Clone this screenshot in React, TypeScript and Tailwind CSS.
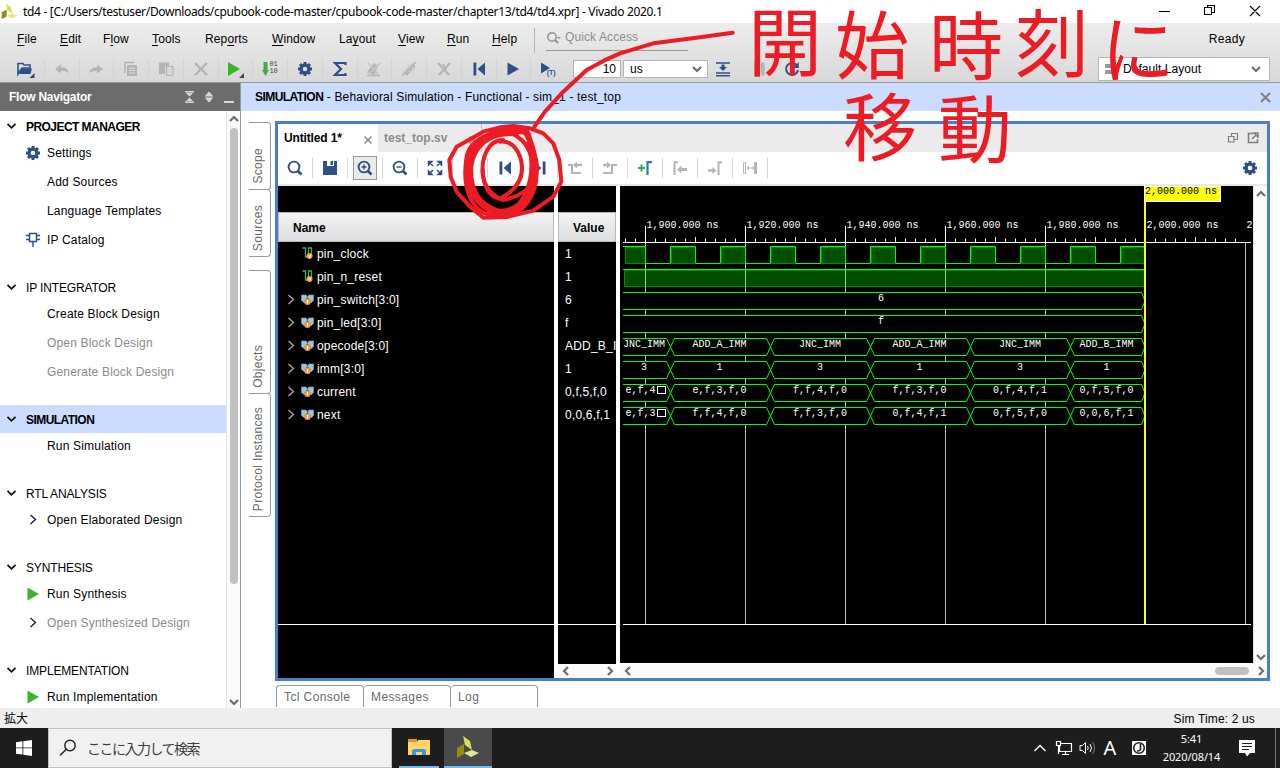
import React from "react";

const NAVY = "#2f4f88";
const GREY = "#b4b4b4";

type IconProps = { color?: string };

function Svg({ children, size = 16 }: { children: React.ReactNode; size?: number }) {
  return (
    <svg width={size} height={size} viewBox="0 0 16 16" fill="none" className="block shrink-0">
      {children}
    </svg>
  );
}

function Gear({ color = NAVY }: IconProps) {
  return (
    <Svg>
      <g stroke={color}>
        <circle cx="8" cy="8" r="3.9" strokeWidth="3.2" />
        {[0, 45, 90, 135].map((a) => (
          <path key={a} d="M8 1v2.5M8 12.500v2.500" strokeWidth="3" transform={`rotate(${a} 8 8)`} />
        ))}
      </g>
    </Svg>
  );
}

function Folder() {
  return (
    <svg width="20" height="20" viewBox="0 0 20 20" className="block shrink-0">
      <path d="M2 15V4.500h5l1 1.500h6v3H6z" fill="none" stroke={NAVY} strokeWidth="1.600" />
      <path d="M5.500 9.500h10.500l-1.500 5.500H3z" fill={NAVY} />
      <path d="M18.500 14v5h-5z" fill="#444" />
    </svg>
  );
}

const Undo = () => <Svg><path d="M1 8l6-4.500v2.800c4 0 7 1.500 8 6-2-2-4.500-2.300-8-2.300v2.500z" fill={GREY} /></Svg>;
const Redo = () => <Svg><path d="M15 8L9 3.500v2.800c-4 0-7 1.500-8 6 2-2 4.500-2.300 8-2.300v2.500z" fill={GREY} /></Svg>;
const Copy = () => (
  <Svg>
    <path d="M2 12V1.500h9" stroke={GREY} strokeWidth="1.500" />
    <path d="M4 4h10v11H4z" fill={GREY} />
    <path d="M6 7h6M6 9.500h6M6 12h6" stroke="#ddd" />
  </Svg>
);
const Paste = () => (
  <Svg>
    <path d="M1 1.500h10v3.500H7v8H1z" fill={GREY} />
    <path d="M8.500 5.500H15v9H8.500z" fill="#d8d8d8" stroke={GREY} strokeWidth="1.200" />
  </Svg>
);
const Cross = () => <Svg><path d="M2 2l12 12M14 2L2 14" stroke={GREY} strokeWidth="2.300" /></Svg>;
const RunGreen = () => (
  <svg width="20" height="20" viewBox="0 0 20 20" className="block shrink-0">
    <path d="M3 3l12 7-12 7z" fill="#3cb32a" />
    <path d="M19 14v5h-5z" fill="#444" />
  </svg>
);
const PlayGreen = () => <Svg><path d="M2.500 1.500L14 8 2.500 14.500z" fill="#3cb32a" /></Svg>;
function Binary() {
  return (
    <span className="flex items-center">
      <svg width="7" height="16" viewBox="0 0 7 16"><path d="M1.500 1h4v8h1.500L3.500 15 0 9h1.500z" fill="#46a84a" /></svg>
      <span className="-mt-[2px] flex flex-col font-['Liberation_Mono',monospace] text-[7px] leading-[7px] text-[#444]">
        <span>01</span>
        <span>10</span>
      </span>
    </span>
  );
}
const Sigma = () => <Svg><path d="M13.500 4V2H3l6 6-6 6h10.500v-2" stroke={NAVY} strokeWidth="2.200" /></Svg>;
const Struck = () => (
  <Svg>
    <path d="M2 11l6-8 3 2-3 8zM1 14.500h13" fill={GREY} stroke={GREY} strokeWidth="1.400" />
    <path d="M2 2l11 12M14 2L3 13" stroke="#c4c4c4" strokeWidth="1.500" />
  </Svg>
);
const Chip = () => (
  <Svg>
    <path d="M4 13L13 4" stroke={GREY} strokeWidth="5" />
    <path d="M1 9l2 2M3.500 6.500l9 6M6 3.500l8 5.500M2 13L14 1" stroke="#d0d0d0" strokeWidth="1.200" />
    <path d="M1 15L15 1" stroke={GREY} strokeWidth="1.300" />
  </Svg>
);
const Wand = () => (
  <Svg>
    <path d="M3 14L14 2M2 2l11 12" stroke={GREY} strokeWidth="2.200" />
    <path d="M7 3l3 6" stroke={GREY} strokeWidth="1.500" />
  </Svg>
);
const ToStart = () => <Svg><path d="M2.500 1.500h2.800v13H2.500zM14 1.500v13L6.500 8z" fill={NAVY} /></Svg>;
const ToEnd = () => <Svg><path d="M13.500 1.500h-2.800v13h2.800zM2 1.500v13L9.500 8z" fill={NAVY} /></Svg>;
const Play = () => <Svg><path d="M2.500 1.500L14 8 2.500 14.500z" fill={NAVY} /></Svg>;
const PlayT = () => (
  <span className="flex items-start">
    <svg width="9" height="16" viewBox="0 0 9 16"><path d="M0 1.500l9 5.500-9 5.500z" fill={NAVY} /></svg>
    <span className="-ml-[3px] mt-[8px] text-[7px] font-bold leading-[8px] text-[#2f4f88]">(T)</span>
  </span>
);
const Step = () => (
  <Svg>
    <path d="M1 2h14M1 12h14M1 14.800h14" stroke={NAVY} strokeWidth="1.500" />
    <path d="M6.500 3.500h3v2.500H12l-4 4-4-4h2.500z" fill={NAVY} />
  </Svg>
);
const Pause = () => <Svg><path d="M3 1.500h3.500v13H3zM10 1.500h3.500v13H10z" fill={GREY} /></Svg>;
const Reload = () => (
  <Svg>
    <path d="M13 4.500A6 6 0 1 0 14 9" stroke={NAVY} strokeWidth="2" />
    <path d="M14.800 1v6H9z" fill={NAVY} />
  </Svg>
);
function Lens({ sign }: { sign?: string }) {
  return (
    <Svg>
      <circle cx="7" cy="7" r="5.400" stroke={NAVY} strokeWidth="1.900" />
      <path d="M11 11l3.500 3.500" stroke={NAVY} strokeWidth="2.700" />
      {sign && <path d={sign} stroke={NAVY} strokeWidth="1.400" />}
    </Svg>
  );
}
const Save = () => <Svg><path d="M1 1h4v5h7V1h3v14H1z" fill={NAVY} /><path d="M8.500 1H11v4H8.500z" fill={NAVY} /></Svg>;
const Fit = () => (
  <Svg>
    <g fill={NAVY} stroke={NAVY} strokeWidth="1.500">
      {[0, 90, 180, 270].map((a) => (
        <path key={a} d="M1.500 5V1.500H5zM2 2l4 4" transform={`rotate(${a} 8 8)`} />
      ))}
    </g>
  </Svg>
);
const PrevEdge = () => <Svg><path d="M1 5h4v8h9" stroke={GREY} strokeWidth="2" /><path d="M6 5l4-3.500v2.200h5v2.600h-5v2.200z" fill={GREY} /></Svg>;
const NextEdge = () => <Svg><path d="M1 13h9V5h5" stroke={GREY} strokeWidth="2" /><path d="M9 5L5 1.500v2.200H1v2.600h4v2.200z" fill={GREY} /></Svg>;
const AddMarker = () => (
  <Svg>
    <path d="M1 8h7M4.500 4.500v7" stroke="#2fa84f" strokeWidth="2" />
    <path d="M10.500 15V2.200H15" stroke="#2b7bb0" strokeWidth="2.200" />
  </Svg>
);
const PrevMarker = () => <Svg><path d="M2.500 15V2.200H6" stroke={GREY} strokeWidth="2" /><path d="M5 9.500l4.500-4v2.500H15v3H9.500v2.500z" fill={GREY} /></Svg>;
const NextMarker = () => <Svg><path d="M11.500 15V2.200H15" stroke={GREY} strokeWidth="2" /><path d="M9.500 10.500L5.500 7v2.200H1v2.600h4.500V14z" fill={GREY} /></Svg>;
const Span = () => (
  <Svg>
    <path d="M1.500 2.500h2v11h-2z" stroke={GREY} />
    <path d="M13.500 2v12" stroke={GREY} strokeWidth="3" />
    <path d="M5 8h7M7 6L5 8l2 2M10 6l2 2-2 2" stroke={GREY} />
  </Svg>
);

const DownChevron = () => (
  <svg width="11" height="8" viewBox="0 0 11 8" fill="none"><path d="M1.500 1.800l4 4 4-4" stroke="#111" strokeWidth="1.800" /></svg>
);
const RightChevron = ({ color = "#222" }: IconProps) => (
  <svg width="8" height="11" viewBox="0 0 8 11" fill="none"><path d="M1.500 1l5 4.500-5 4.500" stroke={color} strokeWidth="1.400" /></svg>
);
function Arrow({ dir }: { dir: "up" | "down" | "left" | "right" }) {
  const d = { up: "M2 8l4-4 4 4", down: "M2 4l4 4 4-4", left: "M8 2L4 6l4 4", right: "M4 2l4 4-4 4" }[dir];
  return (
    <svg width="12" height="12" viewBox="0 0 12 12" fill="none" className="block shrink-0">
      <path d={d} stroke="#6e6e6e" strokeWidth="2.200" />
    </svg>
  );
}
const Close = ({ color = "#888", size = 10 }: IconProps & { size?: number }) => (
  <svg width={size} height={size} viewBox="0 0 10 10" fill="none" className="block"><path d="M1.500 1.500l7 7M8.500 1.500l-7 7" stroke={color} strokeWidth="1.500" /></svg>
);

function Logo({ size }: { size: number }) {
  return (
    <svg width={size} height={size} viewBox="0 0 24 24" className="block shrink-0">
      <path d="M7 1l7 5 2 9-7-5z" fill="#d9dc55" />
      <path d="M1 13l7-4v10l-7 4z" fill="#918f10" />
      <path d="M8 18l8-3 7 3-8 4z" fill="#e6e48e" />
    </svg>
  );
}

function Menu({ pre, u, post, w }: { pre?: string; u: string; post: string; w: string }) {
  return (
    <span className={`${w} shrink-0`}>
      {pre}
      <span className="underline underline-offset-2">{u}</span>
      {post}
    </span>
  );
}

const TOOLS = [Folder, Undo, Redo, Copy, Paste, Cross, RunGreen, Binary, Gear, Sigma, Struck, Chip, Wand, ToStart, Play, PlayT];

function TopBar() {
  return (
    <header className="h-[60px] shrink-0 border-b border-[#999] bg-linear-to-b from-[#ededed] to-[#d8d8d8]">
      <div className="flex h-[32px] items-center pl-[17px] pr-[35px] text-[12px] tracking-[0.12px]">
        <Menu u="F" post="ile" w="w-[43px]" />
        <Menu u="E" post="dit" w="w-[43px]" />
        <Menu pre="F" u="l" post="ow" w="w-[49px]" />
        <Menu u="T" post="ools" w="w-[53px]" />
        <Menu pre="Rep" u="o" post="rts" w="w-[67px]" />
        <Menu u="W" post="indow" w="w-[67px]" />
        <Menu pre="La" u="y" post="out" w="w-[59px]" />
        <Menu u="V" post="iew" w="w-[49px]" />
        <Menu u="R" post="un" w="w-[45px]" />
        <Menu u="H" post="elp" w="w-[42px]" />
        <div className="mt-[3px] h-[25px] w-px bg-[#b5b5b5]" />
        <div className="ml-[11px] flex h-[24px] w-[142px] items-center border-b border-[#999] text-[#8d8d8d]">
          <svg width="19" height="14" viewBox="0 0 19 14" fill="none">
            <circle cx="6" cy="5" r="4.200" stroke="#909090" strokeWidth="1.500" />
            <path d="M9 8l3 3" stroke="#909090" strokeWidth="2" />
            <path d="M11 5h4l-2 2z" fill="#909090" />
          </svg>
          <span className="mb-[4px] tracking-[0.100px]">Quick Access</span>
        </div>
        <span className="ml-auto tracking-[0.300px]">Ready</span>
      </div>
      <div className="flex h-[27px] items-center pl-[9px] pr-[10px]">
        {TOOLS.map((Icon, i) => (
          <span key={i} className={`flex h-[20px] w-[34.750px] shrink-0 items-center justify-center ${i ? "border-l border-[#d3d3d3]" : ""}`}>
            <Icon />
          </span>
        ))}
        <div className="ml-[8px] h-[18px] w-[48px] border border-[#b5b5b5] bg-white pr-[4px] text-right text-[12px] leading-[17px]">10</div>
        <div className="ml-[2px] flex h-[18px] w-[85px] items-center justify-between border border-[#b5b5b5] bg-white pl-[6px] pr-[4px] text-[12px]">
          us<Arrow dir="down" />
        </div>
        <span className="ml-[7px]"><Step /></span>
        <span className="ml-[20px]"><Pause /></span>
        <span className="ml-[17px]"><Reload /></span>
        <div className="ml-auto flex h-[24px] w-[172px] items-center border border-[#b5b5b5] bg-white pl-[6px] pr-[7px] text-[12px] tracking-[0.060px]">
          <span className="mr-[6px] flex flex-col gap-[2px]">
            <span className="h-[4px] w-[12px] bg-[#999]" />
            <span className="h-[4px] w-[12px] bg-[#999]" />
          </span>
          Default Layout
          <span className="ml-auto"><Arrow dir="down" /></span>
        </div>
      </div>
    </header>
  );
}

type NavItem = { label: string; icon?: "gear" | "ip" | "run" | "more"; dim?: boolean };
const NAV: { title: string; bold?: boolean; on?: boolean; items: NavItem[] }[] = [
  { title: "PROJECT MANAGER", bold: true, items: [{ label: "Settings", icon: "gear" }, { label: "Add Sources" }, { label: "Language Templates" }, { label: "IP Catalog", icon: "ip" }] },
  { title: "IP INTEGRATOR", items: [{ label: "Create Block Design" }, { label: "Open Block Design", dim: true }, { label: "Generate Block Design", dim: true }] },
  { title: "SIMULATION", bold: true, on: true, items: [{ label: "Run Simulation" }] },
  { title: "RTL ANALYSIS", items: [{ label: "Open Elaborated Design", icon: "more" }] },
  { title: "SYNTHESIS", items: [{ label: "Run Synthesis", icon: "run" }, { label: "Open Synthesized Design", icon: "more", dim: true }] },
  { title: "IMPLEMENTATION", items: [{ label: "Run Implementation", icon: "run" }] },
];

function NavIcon({ kind }: { kind?: string }) {
  if (kind === "gear") return <Gear />;
  if (kind === "run") return <PlayGreen />;
  if (kind === "more") return <RightChevron />;
  if (kind === "ip")
    return (
      <Svg>
        <path d="M4.500 1.500h7v8h-7z" stroke={NAVY} strokeWidth="1.500" />
        <path d="M1 3.500h3.500M1 7.500h3.500M11.500 3.500H15M11.500 7.500H15M8 9.500V15" stroke={NAVY} strokeWidth="1.500" />
      </Svg>
    );
  return null;
}

function Navigator() {
  return (
    <aside className="flex w-[241px] shrink-0 flex-col border-r border-[#999]">
      <div className="flex h-[28px] shrink-0 items-center bg-[#6c6c6c] pl-[9px] pr-[5px] text-[12px] font-bold tracking-[-0.250px] text-white">
        Flow Navigator
        <svg width="52" height="16" viewBox="0 0 52 16" className="ml-auto" fill="#d8d8d8">
          <path d="M2 2h9v1.500H2zM3 4h7L6.500 7.500zM2 12.500h9V14H2zM3 12h7L6.500 8.500z" />
          <path d="M22 7h8l-4-4.500zM22 9h8l-4 4.500zM22 7.500h8v1h-8zM41 12h10v2H41z" />
        </svg>
      </div>
      <div className="flex min-h-0 flex-1">
        <nav className="flex-1 overflow-hidden pt-px text-[12px]">
          {NAV.map((g) => (
            <section key={g.title} className="mb-[19px]">
              <div className={`flex h-[28px] items-center ${g.on ? "bg-[#cadcff]" : ""}`}>
                <span className="ml-[6px] w-[20px]"><DownChevron /></span>
                <span className={g.bold ? "pt-px font-bold tracking-[-0.550px]" : "pt-px tracking-[-0.150px]"}>{g.title}</span>
              </div>
              <div className="-mt-[2px]">
                {g.items.map((it) => (
                  <div key={it.label} className={`flex h-[29px] items-center ${it.dim ? "text-[#8a8a8a]" : ""}`}>
                    <span className="ml-[25px] mr-[6px] flex w-[16px] justify-center"><NavIcon kind={it.icon} /></span>
                    <span className="tracking-[0.180px]">{it.label}</span>
                  </div>
                ))}
              </div>
            </section>
          ))}
        </nav>
        <div className="flex w-[14px] shrink-0 flex-col items-center border-l border-[#e3e3e3] bg-[#fafafa] pt-[2px]">
          <Arrow dir="up" />
          <div className="mt-[3px] h-[456px] w-[8px] rounded-full bg-[#c1c1c1]" />
          <div className="mt-auto"><Arrow dir="down" /></div>
        </div>
      </div>
    </aside>
  );
}

function SideTab({ label, h }: { label: string; h: string }) {
  return (
    <div className={`${h} flex w-[22px] flex-col items-center justify-end rounded-r-[4px] border-b border-r border-t border-[#999] pb-[5px] pr-[4px] text-[12px] tracking-[0.300px] text-[#6a6a6a]`}>
      <span className="rotate-180 whitespace-nowrap leading-[16px] [writing-mode:vertical-rl]">{label}</span>
    </div>
  );
}

const WAVE_TOOLS: React.ReactNode[] = [
  <Lens />, <Save />, <Lens sign="M4.500 7h5M7 4.500v5" />, <Lens sign="M4.500 7h5" />, <Fit />,
  <Svg><path d="M10 1v14" stroke="#e8a33a" strokeWidth="2" /></Svg>,
  <ToStart />, <ToEnd />, <PrevEdge />, <NextEdge />, <AddMarker />, <PrevMarker />, <NextMarker />, <Span />,
];

const SIGNALS: [string, string, boolean][] = [
  ["pin_clock", "1", false],
  ["pin_n_reset", "1", false],
  ["pin_switch[3:0]", "6", true],
  ["pin_led[3:0]", "f", true],
  ["opecode[3:0]", "ADD_B_IMM", true],
  ["imm[3:0]", "1", true],
  ["current", "0,f,5,f,0", true],
  ["next", "0,0,6,f,1", true],
];

const WireIcon = () => (
  <svg width="12" height="13" viewBox="0 0 12 13" fill="none" className="shrink-0">
    <path d="M.500 1h3v9h3.500M6.500 8V1h3v8" stroke="#3fae54" strokeWidth="1.300" />
    <circle cx="7.500" cy="9" r="3" fill="#f09a3c" />
    <path d="M6.500 8l1 2.500 1.500-3" stroke="#fff" />
  </svg>
);
const BusIcon = () => (
  <svg width="13" height="12" viewBox="0 0 13 12" fill="none" className="shrink-0">
    <path d="M.500 1h4.500l1.500 2 1.500-2h4.500v5.500l-2 2H3l-2.500-2z" fill="#9cc6dc" stroke="#7d9dae" strokeWidth=".7" />
    <path d="M3 7l3.500-4L10 7z" fill="#555" />
    <circle cx="6.500" cy="7.700" r="3.200" fill="#f09a3c" />
    <path d="M6.500 6v3.400" stroke="#fff" strokeWidth="1.200" />
  </svg>
);

const BUS_EDGES = [670.5, 770.5, 870.5, 970.5, 1070.5];
const TEXT_X = [644, 719.5, 820, 919.5, 1020, 1106.5];
const BUS_VALUES = [
  ["JNC_IMM", "ADD_A_IMM", "JNC_IMM", "ADD_A_IMM", "JNC_IMM", "ADD_B_IMM"],
  ["3", "1", "3", "1", "3", "1"],
  ["e,f,4", "e,f,3,f,0", "f,f,4,f,0", "f,f,3,f,0", "0,f,4,f,1", "0,f,5,f,0"],
  ["e,f,3", "f,f,4,f,0", "f,f,3,f,0", "0,f,4,f,1", "0,f,5,f,0", "0,0,6,f,1"],
];
const HIGHS = [[624, 645], ...Array.from({ length: 10 }, (_, i) => [670 + i * 50, 695 + i * 50])];

function busPath(top: number, edges: number[]) {
  const b = top + 17;
  const m = top + 8.5;
  let up = `M623 ${top}`;
  let down = `M623 ${b}`;
  for (const x of edges) {
    up += `H${x - 4}L${x + 4} ${b}M${x + 4} ${top}`;
    down += `H${x - 4}L${x + 4} ${top}M${x + 4} ${b}`;
  }
  return `${up}H1141.500L1145 ${m}${down}H1141.500L1145 ${m}`;
}

function Wave() {
  return (
    <svg width="633" height="477" viewBox="620 186 633 477" className="block bg-black font-['Liberation_Mono',monospace] text-[10px]" fill="none">
      <g stroke="#bebebe">
        {[645.5, 745.5, 845.5, 945.5, 1045.5, 1245.5].map((x) => <path key={x} d={`M${x} 243V624`} />)}
      </g>
      <g stroke="#fff">
        <path d="M623 242.500H1251M623 624.500H1251" />
        {Array.from({ length: 62 }, (_, i) => 625.5 + i * 10).map((x, i) => (
          <path key={x} d={`M${x} ${i % 10 === 2 ? 226 : i % 10 === 7 ? 237 : 238.5}V242`} />
        ))}
      </g>
      <g fill="#fff">
        {["1,900.000 ns", "1,920.000 ns", "1,940.000 ns", "1,960.000 ns", "1,980.000 ns", "2,000.000 ns", "2"].map((t, i) => (
          <text key={t} x={646.5 + i * 100} y="228">{t}</text>
        ))}
      </g>
      {HIGHS.map(([a, b]) => (
        <g key={a}>
          <rect x={a + 1} y="247" width={b - a - 1} height="17" fill="#004f00" />
          <path d={`M${a + 1.5} 263.500V247.500H${b}M${a + 1} 263.500H${b}`} stroke="#008c00" />
        </g>
      ))}
      <path
        d={"M623 246.500H645.500V263.500" + HIGHS.slice(1).map(([a, b]) => `H${a + 0.5}V246.500H${b + 0.5}${b < 1145 ? "V263.500" : ""}`).join("")}
        stroke="#00ff00"
      />
      <rect x="624" y="270" width="521" height="17" fill="#004f00" />
      <path d="M1145 286.500H624.500V270.500H1145" stroke="#008c00" />
      <path d="M623 269.500H1145" stroke="#00ff00" />
      <g stroke="#8fce8f">
        {[645.5, 745.5, 845.5, 945.5, 1045.5].map((x) => <path key={x} d={`M${x} 270V287`} />)}
      </g>
      {[0, 1, 2, 3, 4, 5].map((r) => {
        const top = 292.5 + r * 23;
        return (
          <g key={r}>
            <rect x="623" y={top} width="521" height="17" fill="#000" />
            <path d={busPath(top, r < 2 ? [] : BUS_EDGES)} stroke="#00ff00" />
            <g fill="#fff" textAnchor="middle">
              {r < 2 ? (
                <text x="881" y={top + 8.5}>{r ? "f" : "6"}</text>
              ) : (
                BUS_VALUES[r - 2].map((v, i) => (
                  <text key={i} x={r > 3 && i === 0 ? 640.5 : TEXT_X[i]} y={top + 8.5}>{v}</text>
                ))
              )}
            </g>
            {r > 3 && <rect x="657.500" y={top + 2} width="8" height="7" stroke="#fff" />}
          </g>
        );
      })}
      <path d="M1145 186V624" stroke="#ffff00" strokeWidth="2" />
      <rect x="1144" y="186" width="77" height="16" fill="#fff" />
      <rect x="1145" y="187" width="75" height="14" fill="#ffff00" />
      <text x="1145" y="194" fill="#000">2,000.000 ns</text>
    </svg>
  );
}

function WavePanel() {
  return (
    <div className="flex h-[560px] w-[995px] flex-col border-[3px] border-[#4a7dcf]">
      <div className="flex h-[28px] shrink-0 bg-[#ebebeb] text-[12px] font-bold">
        <div className="flex w-[100px] items-center justify-between bg-white pl-[6px] pr-[5px]">
          <span className="tracking-[-0.150px]">Untitled 1*</span>
          <span className="pt-[3px]"><Close /></span>
        </div>
        <div className="flex w-[104px] items-center justify-between border-r border-[#c4c4c4] pl-[6px] pr-[3px] text-[#8c8c8c]">
          <span>test_top.sv</span>
          <span className="pt-[3px]"><Close /></span>
        </div>
        <svg width="34" height="14" viewBox="0 0 34 14" className="ml-auto mr-[7px] mt-[7px]" fill="none" stroke="#7d7d7d">
          <path d="M5.500 5V2.500h6v6H8M2.500 5.500h5.500v5.500H2.500z" strokeWidth="1.200" />
          <path d="M27 2.500h-4.500v9h9V8" strokeWidth="1.500" />
          <path d="M26 8l4-4M28 2h4v4z" strokeWidth="1.500" />
        </svg>
      </div>
      <div className="flex h-[34px] shrink-0 items-center border-b-2 border-[#e8e8e8] pr-[9px]">
        {WAVE_TOOLS.map((icon, i) => (
          <React.Fragment key={i}>
            {i > 0 && <span className="h-[20px] w-px bg-[#d5d5d5]" />}
            <span className="flex w-[34px] justify-center">
              <span className={i === 2 ? "-m-[4px] border border-[#9a9a9a] bg-[#ebebeb] p-[3px]" : ""}>{icon}</span>
            </span>
          </React.Fragment>
        ))}
        <span className="h-[20px] w-px bg-[#d5d5d5]" />
        <span className="ml-auto"><Gear /></span>
      </div>
      <div className="flex min-h-0 flex-1">
        <div className="flex w-[276px] shrink-0 flex-col bg-black">
          <div className="mt-[26px] h-[30px] border border-[#b9b9b9] bg-linear-to-b from-[#f2f2f3] to-[#dfdfe1] pl-[14px] text-[12px] font-bold leading-[30px]">Name</div>
          {SIGNALS.map(([name, , bus]) => (
            <div key={name} className="flex h-[23px] items-center text-[12px] tracking-[0.200px] text-white">
              <span className="ml-[9px] w-[14px]">{bus && <RightChevron color="#a5a5a5" />}</span>
              <span className="flex w-[16px]">{bus ? <BusIcon /> : <span className="pl-px"><WireIcon /></span>}</span>
              {name}
            </div>
          ))}
          <div className="mt-[198px] h-px bg-white" />
        </div>
        <div className="ml-[4px] flex w-[58px] shrink-0 flex-col bg-black">
          <div className="mt-[26px] h-[30px] border border-[#b9b9b9] bg-linear-to-b from-[#f2f2f3] to-[#dfdfe1] pl-[14px] text-[12px] font-bold leading-[30px]">Value</div>
          {SIGNALS.map(([name, value]) => (
            <div key={name} className="h-[23px] overflow-hidden whitespace-nowrap pl-[7px] text-[12px] leading-[24px] tracking-[0.200px] text-white">{value}</div>
          ))}
          <div className="mt-[198px] h-px bg-white" />
          <div className="mt-auto flex h-[14px] items-center justify-between bg-[#fafafa] pl-[2px]">
            <Arrow dir="left" /><Arrow dir="right" />
          </div>
        </div>
        <div className="ml-[4px] flex flex-1 flex-col">
          <div className="flex">
            <Wave />
            <div className="flex h-[477px] flex-1 flex-col items-center justify-between border-l border-[#e3e3e3] bg-[#fafafa] pt-[2px]">
              <Arrow dir="up" /><Arrow dir="down" />
            </div>
          </div>
          <div className="mt-px flex h-[14px] items-center bg-[#fafafa] pl-[2px]">
            <Arrow dir="left" />
            <div className="ml-auto mr-[6px] h-[8px] w-[34px] rounded-full bg-[#c1c1c1]" />
            <Arrow dir="right" />
          </div>
        </div>
      </div>
    </div>
  );
}

function Simulation() {
  return (
    <main className="flex flex-1 flex-col">
      <div className="flex h-[28px] shrink-0 items-center bg-[#cadcff] pl-[14px] pr-[8px] text-[12px]">
        <span className="font-bold tracking-[-0.550px]">SIMULATION</span>
        <span className="whitespace-pre tracking-[0.160px]"> - Behavioral Simulation - Functional - sim_1 - test_top</span>
        <span className="ml-auto"><Close color="#7f7f7f" size={13} /></span>
      </div>
      <div className="flex flex-1 pt-[10px]">
        <div className="ml-[8px] w-[26px]">
          <SideTab label="Scope" h="mt-px h-[68px]" />
          <SideTab label="Sources" h="-mt-px h-[68px]" />
          <SideTab label="Objects" h="mt-[13px] h-[124px]" />
          <SideTab label="Protocol Instances" h="-mt-px h-[124px]" />
        </div>
        <div>
          <WavePanel />
          <div className="ml-px mt-[4px] flex text-[12px] tracking-[0.400px] text-[#6a6a6a]">
            {["Tcl Console", "Messages", "Log"].map((t, i) => (
              <div key={t} className={`h-[22px] rounded-t-[4px] border-r border-t border-[#999] pl-[7px] leading-[22px] ${i ? "w-[87px]" : "w-[88px] border-l"}`}>{t}</div>
            ))}
          </div>
        </div>
      </div>
    </main>
  );
}

function Taskbar() {
  return (
    <footer className="flex h-[40px] shrink-0 items-center bg-[#1d1d1d] text-white">
      <div className="flex w-[48px] justify-center">
        <svg width="16" height="16" viewBox="0 0 16 16" fill="#fff"><path d="M0 2.200l6.500-.9v6.200H0zM7.300 1.200L16 0v7.500H7.300zM0 8.300h6.500v6.300L0 13.700zM7.300 8.300H16V16l-8.700-1.200z" /></svg>
      </div>
      <div className="flex h-[40px] w-[344px] items-center border border-[#c0c0c0] bg-[#f1f1f1] pl-[10px] text-[#3c3c3c]">
        <svg width="18" height="18" viewBox="0 0 18 18" fill="none"><circle cx="11" cy="6.500" r="5.200" stroke="#222" strokeWidth="1.400" /><path d="M7.200 10.300L1 16.500" stroke="#222" strokeWidth="1.500" /></svg>
        <span className="ml-[10px] font-['Noto_Sans_CJK_JP',sans-serif] text-[14px] tracking-[-1.500px]">ここに入力して検索</span>
      </div>
      <div className="ml-[7px] flex h-[40px] w-[40px] flex-col items-center border-b-2 border-[#76b9ed] pt-[10px]">
        <svg width="22" height="18" viewBox="0 0 22 18"><path d="M0 1h9v4H0z" fill="#e09a10" /><path d="M0 4h9l1-2h12v15H0z" fill="#ffd567" /><path d="M4 17v-5l2-1h10l2 1v5h-4v-3H8v3z" fill="#3b97dd" /></svg>
      </div>
      <div className="ml-[5px] flex h-[40px] w-[48px] flex-col items-center border-b-2 border-[#76b9ed] bg-[#4a4a4a] pt-[7px]"><Logo size={24} /></div>
      <div className="ml-auto flex h-[40px] items-center">
        <svg width="14" height="10" viewBox="0 0 14 10" fill="none"><path d="M1.500 8L7 2.500 12.500 8" stroke="#fff" strokeWidth="1.300" /></svg>
        <svg width="18" height="16" viewBox="0 0 18 16" fill="none" stroke="#fff" className="ml-[8px]"><path d="M5.500 3.500H16.500v8H4.500V6M1.500 1.500h4v4h-4zM3.500 5.500V14M10.500 11.500v3M7 14.500h7" strokeWidth="1.200" /></svg>
        <svg width="17" height="16" viewBox="0 0 17 16" fill="none" stroke="#fff" className="ml-[6px]"><path d="M1 5.500h2.500l3-3v11l-3-3H1zM8.500 6q1.500 2 0 4M11 4q3 4 0 8" /><path d="M13.500 2q4 6 0 12" stroke="#777" /></svg>
        <span className="ml-[7px] w-[14px] text-center font-['Noto_Sans',sans-serif] text-[20px] leading-[20px]">A</span>
        <svg width="14" height="14" viewBox="0 0 14 14" className="ml-[15px]" fill="none"><path d="M0 0h14v14H0z" fill="#fff" /><circle cx="7" cy="7" r="5.300" stroke="#222" strokeWidth="1.600" /><path d="M8.500 3v5q0 2-3.500 2" stroke="#222" strokeWidth="1.600" /></svg>
        <div className="ml-[12px] flex w-[67px] flex-col items-center font-['Noto_Sans',sans-serif] text-[11px] leading-[18px] tracking-[-0.100px]">
          <span>5:41</span>
          <span>2020/08/14</span>
        </div>
        <svg width="16" height="17" viewBox="0 0 16 17" className="ml-[14px]"><path d="M0 0h16v13h-5l-3 3.500L6 13H0z" fill="#fff" /><path d="M3 3.500h10M3 6.500h10M3 9.500h7" stroke="#222" /></svg>
        <div className="ml-[20px] mr-[4px] h-[40px] w-px bg-[#777]" />
      </div>
    </footer>
  );
}

const INK_TEXT: [string, string][] = [
  ["開", "left-[748px] top-[1px]"],
  ["始", "left-[835px] top-[4px]"],
  ["時", "left-[929px] top-[5px]"],
  ["刻", "left-[1015px] top-[2px]"],
  ["に", "left-[1101px] top-[8px]"],
  ["移", "left-[843px] top-[86px]"],
  ["動", "left-[938px] top-[88px]"],
];

function Ink() {
  return (
    <div className="pointer-events-none absolute inset-0 overflow-hidden">
      <svg width="1280" height="768" viewBox="0 0 1280 768" fill="none" className="block">
        <g transform="translate(420 0) scale(.33333)" stroke="#ed1c24" strokeWidth="12" strokeLinecap="round" strokeLinejoin="round">
          <path d="M938 98L840 112 700 130 600 160 560 178 500 210 425 280 375 335 342 382" />
          <path d="M330 385L280 378 240 382 190 395 110 440 88 480 92 530 110 575 150 620 190 653 260 651 340 632 400 590 424 545 418 480 400 430 370 400 330 385" />
          <path d="M322 392C250 375 150 410 140 470C125 560 150 650 240 648C310 655 350 580 350 520C345 440 330 390 290 385C190 385 138 440 138 520C145 590 190 640 250 640" />
          <path d="M165 450C200 400 260 390 315 398C340 440 350 500 345 550C320 630 260 648 210 630C160 605 136 560 146 480C170 420 230 400 290 402" />
          <path d="M155 460C140 520 150 600 210 625C270 650 330 600 338 540C345 480 328 420 270 398C210 400 160 440 154 500C150 570 180 610 225 628" />
          <path d="M250 420C200 420 185 480 188 520C190 560 220 590 250 600C300 590 350 560 350 510C355 480 330 420 322 400" />
          <path d="M240 425C280 420 303 460 306 500C308 545 280 575 240 596C200 590 190 545 188 510" />
          <path d="M325 430C345 500 345 560 295 625C260 648 210 645 175 605M330 440C345 520 330 590 270 640M325 400C340 450 350 560 310 610M160 450C142 500 145 560 170 590" strokeWidth="14" />
        </g>
      </svg>
      {INK_TEXT.map(([ch, pos]) => (
        <span key={ch} className={`absolute ${pos} font-['Noto_Sans_CJK_JP',sans-serif] text-[74px] font-normal leading-[74px] text-[#ed1c24]`}>{ch}</span>
      ))}
    </div>
  );
}

export default function App() {
  return (
    <div className="relative flex h-[768px] w-[1280px] flex-col overflow-hidden bg-white font-['Liberation_Sans','Noto_Sans_CJK_JP',sans-serif] text-black">
      <div className="flex h-[23px] shrink-0 items-center pl-[1px] pr-[19px] font-['Noto_Sans',sans-serif] text-[12px]">
        <Logo size={17} />
        <span className="ml-[5px] tracking-[-0.320px]">td4 - [C:/Users/testuser/Downloads/cpubook-code-master/cpubook-code-master/chapter13/td4/td4.xpr] - Vivado 2020.1</span>
        <svg width="104" height="14" viewBox="0 0 104 14" className="-mt-[4px] ml-auto" fill="none" stroke="#000" strokeWidth="1.100">
          <path d="M2 8.500h11M50.500 5V2.500h7v7H55M47.500 4.500h7v7h-7zM93 3l10 10M103 3L93 13" />
        </svg>
      </div>
      <TopBar />
      <div className="flex h-[625px] min-h-0 shrink-0 bg-white">
        <Navigator />
        <Simulation />
      </div>
      <div className="flex h-[20px] shrink-0 items-center justify-between bg-[#eee] pl-[4px] pr-[25px] text-[12px]">
        <span className="pt-px">拡大</span>
        <span className="pt-px tracking-[0.150px]">Sim Time: 2 us</span>
      </div>
      <Taskbar />
      <Ink />
    </div>
  );
}
